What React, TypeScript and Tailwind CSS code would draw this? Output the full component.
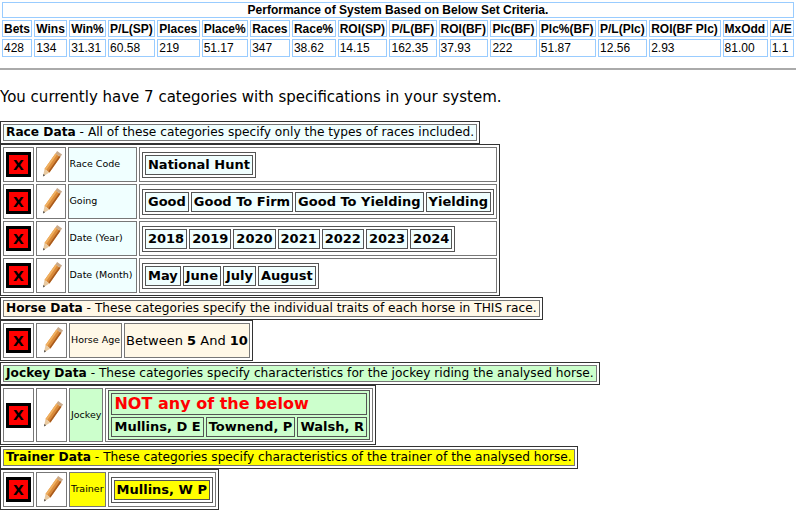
import React from "react";

const Pencil = () => (
  <svg width="26" height="32" viewBox="0 0 26 32">
    <g transform="rotate(35 13 16)">
      <rect x="10" y="1" width="6" height="3" fill="#c9a98a" />
      <rect x="10" y="4" width="6" height="19" fill="#d98a3a" />
      <rect x="10" y="4" width="2" height="19" fill="#f0b060" />
      <rect x="14.5" y="4" width="1.5" height="19" fill="#a85a1e" />
      <polygon points="10,23 16,23 13,30" fill="#e8c9a0" />
      <polygon points="12,27.7 14,27.7 13,30" fill="#444" />
    </g>
  </svg>
);

const XBox = () => (
  <div className="w-[25px] h-[25px] bg-[#ff0000] border-[3px] border-black flex items-center justify-center font-bold text-[14px] leading-none text-black">X</div>
);

const cellB = "border border-[#777]";

function Row({ label, bg, children, labelClass = "" }: { label: string; bg: string; children: React.ReactNode; labelClass?: string }) {
  return (
    <tr>
      <td className={`${cellB} w-[31px] px-[2px] h-[35px] align-middle`}><XBox /></td>
      <td className={`${cellB} w-[31px] align-middle`}><div className="flex justify-center"><Pencil /></div></td>
      <td className={`${cellB} ${bg} text-[9.5px] px-[1px] align-middle whitespace-nowrap ${labelClass}`}>{label}</td>
      <td className={`${cellB} px-[2px] py-[1px] align-middle`}>{children}</td>
    </tr>
  );
}

function Items({ items, bg }: { items: string[]; bg: string }) {
  return (
    <table className="border border-[#555] border-separate border-spacing-[2px]">
      <tbody>
        <tr>
          {items.map((t) => (
            <td key={t} className={`border border-[#555] ${bg} font-bold text-[13px] leading-[18px] px-[2px] whitespace-nowrap`}>{t}</td>
          ))}
        </tr>
      </tbody>
    </table>
  );
}

function Header({ title, text, bg }: { title: string; text: string; bg: string }) {
  return (
    <table className="border border-[#333] border-separate border-spacing-[2px] mt-[1px]">
      <tbody>
        <tr>
          <td className={`border border-[#777] ${bg} text-[12.2px] leading-[15px] px-[2px] whitespace-nowrap`}>
            <b>{title}</b> - {text}
          </td>
        </tr>
      </tbody>
    </table>
  );
}

const cols = ["Bets","Wins","Win%","P/L(SP)","Places","Place%","Races","Race%","ROI(SP)","P/L(BF)","ROI(BF)","Plc(BF)","Plc%(BF)","P/L(Plc)","ROI(BF Plc)","MxOdd","A/E"];
const vals = ["428","134","31.31","60.58","219","51.17","347","38.62","14.15","162.35","37.93","222","51.87","12.56","2.93","81.00","1.1"];

export default function App() {
  return (
    <div className="bg-white text-black w-[796px] h-[526px] overflow-hidden" style={{ fontFamily: '"DejaVu Sans", Verdana, sans-serif' }}>
      <table className="w-full border-separate border-spacing-[2px] text-[12px] leading-[14px]" style={{ fontFamily: '"Liberation Sans", Arial, sans-serif' }}>
        <tbody>
          <tr>
            <td colSpan={17} className="border border-[#99ccff] text-center font-bold h-[15px]">Performance of System Based on Below Set Criteria.</td>
          </tr>
          <tr>
            {cols.map((c) => <td key={c} className="border border-[#99ccff] font-bold px-[1px] h-[17px] whitespace-nowrap">{c}</td>)}
          </tr>
          <tr>
            {vals.map((v, i) => <td key={i} className="border border-[#99ccff] px-[1px] h-[18px] whitespace-nowrap">{v}</td>)}
          </tr>
        </tbody>
      </table>
      <div className="mt-[9px] border-t-2 border-[#aaa]" />
      <div className="text-[15px] mt-[17px] mb-[14px] leading-[20px]">You currently have 7 categories with specifications in your system.</div>

      <Header title="Race Data" text="All of these categories specify only the types of races included." bg="bg-[#f0ffff]" />
      <table className="border border-[#333] border-separate border-spacing-[2px] w-[500px]">
        <tbody>
          <Row label="Race Code" bg="bg-[#f0ffff]" labelClass="w-[72px]"><Items items={["National Hunt"]} bg="bg-[#f0ffff]" /></Row>
          <Row label="Going" bg="bg-[#f0ffff]"><Items items={["Good","Good To Firm","Good To Yielding","Yielding"]} bg="bg-[#f0ffff]" /></Row>
          <Row label="Date (Year)" bg="bg-[#f0ffff]"><Items items={["2018","2019","2020","2021","2022","2023","2024"]} bg="bg-[#f0ffff]" /></Row>
          <Row label="Date (Month)" bg="bg-[#f0ffff]"><Items items={["May","June","July","August"]} bg="bg-[#f0ffff]" /></Row>
        </tbody>
      </table>

      <Header title="Horse Data" text="These categories specify the individual traits of each horse in THIS race." bg="bg-[#fff8e7]" />
      <table className="border border-[#333] border-separate border-spacing-[2px]">
        <tbody>
          <tr>
            <td className={`${cellB} w-[31px] px-[2px] h-[35px]`}><XBox /></td>
            <td className={`${cellB} w-[31px]`}><div className="flex justify-center"><Pencil /></div></td>
            <td className={`${cellB} bg-[#fff8e7] text-[9.5px] px-[1px] whitespace-nowrap`}>Horse Age</td>
            <td className={`${cellB} bg-[#fff8e7] text-[13px] px-[1px] whitespace-nowrap`}>Between <b>5</b> And <b>10</b></td>
          </tr>
        </tbody>
      </table>

      <Header title="Jockey Data" text="These categories specify characteristics for the jockey riding the analysed horse." bg="bg-[#ccffcc]" />
      <table className="border border-[#333] border-separate border-spacing-[2px]">
        <tbody>
          <Row label="Jockey" bg="bg-[#ccffcc]">
            <table className="border border-[#555] border-separate border-spacing-[2px] bg-[#ccffcc]">
              <tbody>
                <tr><td colSpan={3} className="border border-[#555] text-[#ff0000] font-bold text-[16px] px-[2px] leading-[20px]">NOT any of the below</td></tr>
                <tr>
                  {["Mullins, D E","Townend, P","Walsh, R"].map((t) => (
                    <td key={t} className="border border-[#555] font-bold text-[13px] leading-[18px] px-[2px] whitespace-nowrap">{t}</td>
                  ))}
                </tr>
              </tbody>
            </table>
          </Row>
        </tbody>
      </table>

      <Header title="Trainer Data" text="These categories specify characteristics of the trainer of the analysed horse." bg="bg-[#ffff00]" />
      <table className="border border-[#333] border-separate border-spacing-[2px]">
        <tbody>
          <Row label="Trainer" bg="bg-[#ffff00]"><Items items={["Mullins, W P"]} bg="bg-[#ffff00]" /></Row>
        </tbody>
      </table>
    </div>
  );
}
